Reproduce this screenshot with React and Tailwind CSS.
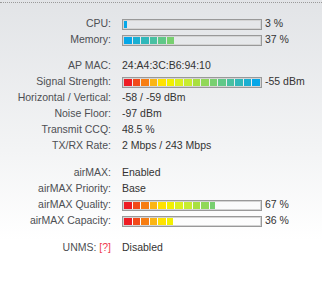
import clsx from "clsx";

const SCALE = [
  "#ee1c24",
  "#f24a1a",
  "#f77d12",
  "#fbb514",
  "#ffe100",
  "#f2f000",
  "#dcf01e",
  "#c7ec30",
  "#a9e040",
  "#91d858",
  "#78d070",
  "#60c888",
  "#48c0a2",
  "#30b8ba",
  "#1aafd2",
  "#05a7e8",
];

const COOL = [...SCALE].reverse();

function Bar({ pct, colors = SCALE }) {
  return (
    <div className="h-[11px] w-[140px] border border-[#999] p-[1px] shadow-[inset_0_0_0_1px_#d4d4d4]">
      <div className="h-full overflow-hidden" style={{ width: `${pct}%` }}>
        <div className="flex h-full w-[136px] gap-[1px]">
          {colors.map((c) => (
            <div key={c} className="h-full flex-1" style={{ backgroundColor: c }} />
          ))}
        </div>
      </div>
    </div>
  );
}

function Row({ label, children, extra }) {
  return (
    <div className="flex h-4 items-center">
      <div className="w-[111px] shrink-0 text-right text-[#4d4f53]">
        {label}
        {extra}
      </div>
      <div className="flex items-center gap-[3px] pl-[11px] text-[#333]">{children}</div>
    </div>
  );
}

export default function App() {
  return (
    <div
      className="h-[300px] w-[322px] bg-gradient-to-b from-[#e2e4e7] via-[#f3f4f5] via-50% to-white to-80% text-[10.5px]"
      style={{ fontFamily: '"Liberation Sans", Arial, sans-serif' }}
    >
      <div className="pt-[2px]">
        <div className="border-t border-dotted border-[#9a9a9a]" />
      </div>
      <div className="flex flex-col pt-[13px]">
        <Row label="CPU:">
          <Bar pct={2} colors={COOL} />
          <span>3 %</span>
        </Row>
        <Row label="Memory:">
          <Bar pct={37} colors={COOL} />
          <span>37 %</span>
        </Row>
        <div className="h-[10px]" />
        <Row label="AP MAC:">24:A4:3C:B6:94:10</Row>
        <Row label="Signal Strength:">
          <Bar pct={100} />
          <span>-55 dBm</span>
        </Row>
        <Row label="Horizontal / Vertical:">-58 / -59 dBm</Row>
        <Row label="Noise Floor:">-97 dBm</Row>
        <Row label="Transmit CCQ:">48.5 %</Row>
        <Row label="TX/RX Rate:">2 Mbps / 243 Mbps</Row>
        <div className="h-[11px]" />
        <Row label="airMAX:">Enabled</Row>
        <Row label="airMAX Priority:">Base</Row>
        <Row label="airMAX Quality:">
          <Bar pct={67} />
          <span>67 %</span>
        </Row>
        <Row label="airMAX Capacity:">
          <Bar pct={36} />
          <span>36 %</span>
        </Row>
        <div className="h-[11px]" />
        <Row
          label="UNMS: "
          extra={<span className={clsx("text-[#ef3b4f]")}>[?]</span>}
        >
          Disabled
        </Row>
      </div>
    </div>
  );
}
